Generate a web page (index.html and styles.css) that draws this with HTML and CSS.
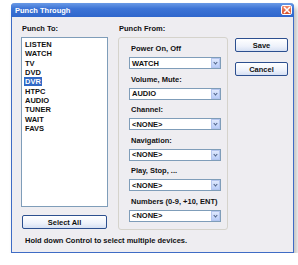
FILE: index.html
```html
<!DOCTYPE html>
<html>
<head>
	<meta charset="utf-8">
	<title>Punch Through</title>
	<link rel="stylesheet" href="styles.css">
</head>
<body>
	<div class="window">
		<div class="titlebar">
			<span class="title">Punch Through</span>
			<span class="close">
				<svg width="8" height="8" viewBox="0 0 8 8"><path d="M1 1 L7 7 M7 1 L1 7" stroke="#fff" stroke-width="1.6"/></svg>
			</span>
		</div>

		<div class="content">
			<div class="main">
				<div class="col-left">
					<div class="label">Punch To:</div>
					<div class="listbox">
						<div class="item">LISTEN</div>
						<div class="item">WATCH</div>
						<div class="item">TV</div>
						<div class="item">DVD</div>
						<div class="item"><span class="selected">DVR</span></div>
						<div class="item">HTPC</div>
						<div class="item">AUDIO</div>
						<div class="item">TUNER</div>
						<div class="item">WAIT</div>
						<div class="item">FAVS</div>
					</div>
					<button class="btn wide">Select All</button>
				</div>

				<div class="col-mid">
					<div class="label">Punch From:</div>
					<div class="groupbox">
						<div class="field">
							<div class="field-label">Power On, Off</div>
							<div class="combo"><span>WATCH</span><span class="arrow"></span></div>
						</div>
						<div class="field">
							<div class="field-label">Volume, Mute:</div>
							<div class="combo"><span>AUDIO</span><span class="arrow"></span></div>
						</div>
						<div class="field">
							<div class="field-label">Channel:</div>
							<div class="combo"><span>&lt;NONE&gt;</span><span class="arrow"></span></div>
						</div>
						<div class="field">
							<div class="field-label">Navigation:</div>
							<div class="combo"><span>&lt;NONE&gt;</span><span class="arrow"></span></div>
						</div>
						<div class="field">
							<div class="field-label">Play, Stop, ...</div>
							<div class="combo"><span>&lt;NONE&gt;</span><span class="arrow"></span></div>
						</div>
						<div class="field">
							<div class="field-label">Numbers (0-9, +10, ENT)</div>
							<div class="combo"><span>&lt;NONE&gt;</span><span class="arrow"></span></div>
						</div>
					</div>
				</div>

				<div class="col-right">
					<button class="btn">Save</button>
					<button class="btn">Cancel</button>
				</div>
			</div>

			<div class="hint">Hold down Control to select multiple devices.</div>
		</div>
	</div>
</body>
</html>
```

FILE: styles.css
```css
html { font-family: "Liberation Sans", Arial, sans-serif; }

body {
  margin: 0;
  padding: 0;
  background: #ffffff;
  font-size: 7.5px;
  font-weight: bold;
  color: #111;
}

.window {
  margin: 3px 0 0 11px;
  width: 283px;
  height: 250px;
  box-sizing: border-box;
  background: #eeedf1;
  border: 1px solid #3f6cc5;
  border-top: none;
  border-radius: 4px 4px 0 0;
  box-shadow: 3px 4px 5px rgba(0, 0, 0, 0.25);
  display: flex;
  flex-direction: column;
}

.titlebar {
  height: 14px;
  margin: 0 -1px;
  padding: 0 2px 0 4px;
  background: linear-gradient(#6a9ae6, #3d74d6 40%, #2f66cc);
  border-radius: 4px 4px 0 0;
  display: flex;
  align-items: center;
  justify-content: space-between;
}

.title {
  color: #fff;
  font-size: 7.5px;
}

.close {
  width: 11px;
  height: 10px;
  box-sizing: border-box;
  border: 1px solid #fff;
  border-radius: 2px;
  background: linear-gradient(#f08a6c, #d8502c);
  display: flex;
  align-items: center;
  justify-content: center;
}

.content {
  flex: 1;
  padding: 6px 0 0 9px;
}

.main {
  display: flex;
}

.label {
  height: 11px;
  line-height: 11px;
  margin-left: 1px;
  margin-bottom: 3px;
}

.col-left {
  width: 87px;
  display: flex;
  flex-direction: column;
}

.listbox {
  height: 170px;
  box-sizing: border-box;
  background: #fff;
  border: 1px solid #7f9db9;
  padding: 2px 0 0 3px;
}

.item {
  line-height: 9.33px;
  height: 9.33px;
}

.selected {
  background: #3169c6;
  color: #fff;
  padding: 0 1px;
  margin-left: -1px;
}

.btn {
  font-family: "Liberation Sans", Arial, sans-serif;
  font-size: 7.5px;
  font-weight: bold;
  color: #111;
  height: 14px;
  padding: 0;
  border: 1px solid #2c4f8f;
  border-radius: 2px;
  background: linear-gradient(#ffffff, #eef2fb 60%, #d6e0f3);
}

.wide {
  margin-top: 8px;
  margin-left: 1px;
  width: 85px;
}

.col-mid {
  width: 110px;
  margin-left: 10px;
  display: flex;
  flex-direction: column;
}

.groupbox {
  height: 193px;
  box-sizing: border-box;
  border: 1px solid #d5d3cc;
  border-radius: 3px;
  padding: 6px 0 0 10px;
  display: flex;
  flex-direction: column;
  gap: 5.5px;
}

.field-label {
  height: 9px;
  line-height: 9px;
  margin-left: 2px;
  margin-bottom: 4px;
}

.combo {
  width: 92px;
  height: 12px;
  box-sizing: border-box;
  background: #fff;
  border: 1px solid #7f9db9;
  display: flex;
  align-items: center;
  justify-content: space-between;
  padding-left: 2px;
}

.arrow {
  width: 9px;
  height: 10px;
  box-sizing: border-box;
  background: linear-gradient(#dfe8fd, #b9cdf8);
  border: 1px solid #b4c6ef;
  position: relative;
}

.arrow::after {
  content: "";
  position: absolute;
  left: 2px;
  top: 2px;
  width: 2px;
  height: 2px;
  border-right: 1px solid #4d6185;
  border-bottom: 1px solid #4d6185;
  transform: rotate(45deg);
}

.col-right {
  width: 53px;
  margin-left: 7px;
  padding-top: 15px;
  display: flex;
  flex-direction: column;
  gap: 10px;
}

.hint {
  margin-top: 6px;
  margin-left: 4px;
  line-height: 9px;
}
```
